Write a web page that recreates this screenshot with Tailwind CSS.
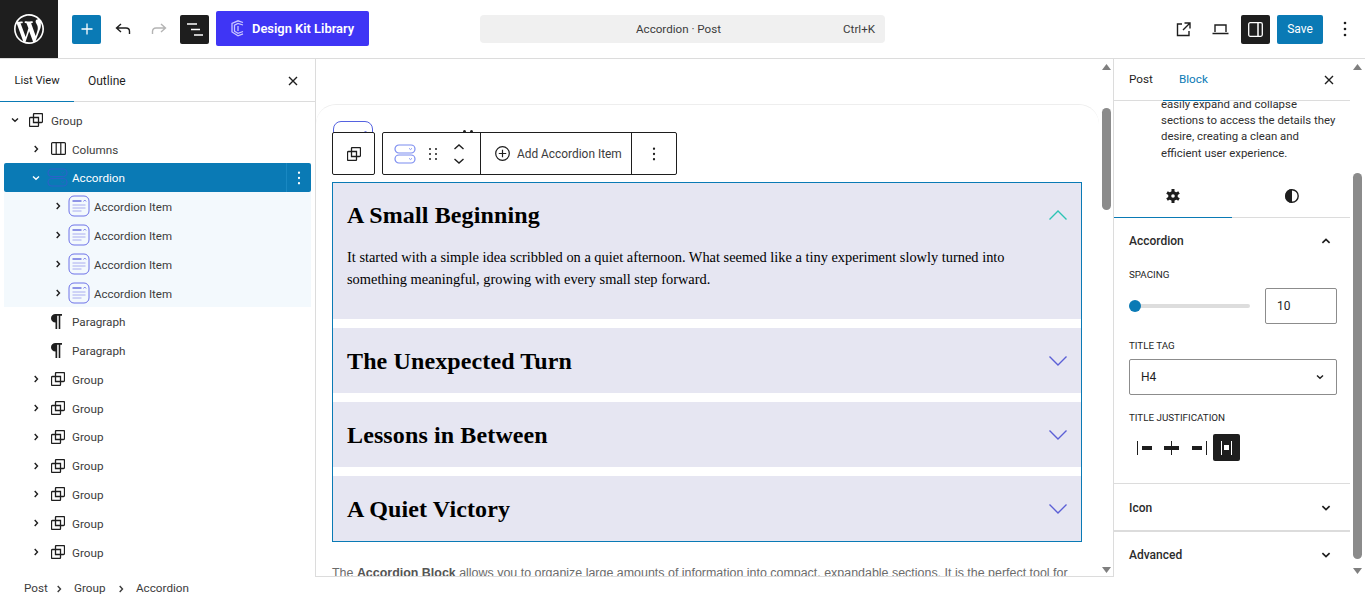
<!DOCTYPE html>
<html lang="en">
<head>
<meta charset="utf-8">
<title>Accordion · Post</title>
<script src="https://cdn.jsdelivr.net/npm/@tailwindcss/browser@4"></script>
</head>
<body class="bg-white">
<svg class="hidden" width="0" height="0">
  <defs>
    <symbol id="group" viewBox="0 0 14 14"><path d="M4.500 4.500H1.500a1 1 0 0 0-1 1v7a1 1 0 0 0 1 1h7a1 1 0 0 0 1-1V9.500M4.500 9.500V1.500a1 1 0 0 1 1-1h7a1 1 0 0 1 1 1v7a1 1 0 0 1-1 1h-8ZM4.500 4.500h5v5" fill="none" stroke="currentColor" stroke-width="1.300"/></symbol>
    <symbol id="down" viewBox="0 0 10 10"><path d="M2 3.500 5 6.300l3-2.800" fill="none" stroke="currentColor" stroke-width="1.400"/></symbol>
    <symbol id="right" viewBox="0 0 10 10"><path d="M3.700 2 6.500 5l-2.800 3" fill="none" stroke="currentColor" stroke-width="1.400"/></symbol>
    <symbol id="item" viewBox="0 0 22 22"><rect x="1" y="1" width="20" height="20" rx="5" fill="none" stroke="#6d72e8" stroke-width="1"/><path d="M4.500 6h9" stroke="#4a4fd8" stroke-width="1.200"/><path d="m15.500 6.500 1.300-1.500 1.300 1.500" fill="none" stroke="#7d82ee" stroke-width="1"/><path d="M4.500 10h13M4.500 13h13M4.500 16h9" stroke="#a9acf0" stroke-width="1"/></symbol>
    <symbol id="kebab" viewBox="0 0 4 16"><circle cx="2" cy="2" r="1.300" fill="currentColor"/><circle cx="2" cy="8" r="1.300" fill="currentColor"/><circle cx="2" cy="14" r="1.300" fill="currentColor"/></symbol>
    <symbol id="close" viewBox="0 0 10 10"><path d="m1 1 8 8M9 1 1 9" fill="none" stroke="currentColor" stroke-width="1.400"/></symbol>
    <symbol id="accordion" viewBox="0 0 22 20"><rect x="1" y="1" width="20" height="8" rx="4" fill="none" stroke="currentColor" stroke-width="1.200"/><rect x="1" y="11" width="20" height="8" rx="4" fill="none" stroke="currentColor" stroke-width="1.200"/><path d="m15 4.300 1.500 1.300 1.500-1.300M15 14.300l1.500 1.300 1.500-1.300" fill="none" stroke="currentColor" stroke-width=".9"/></symbol>
  </defs>
</svg>

<div class="w-[1365px] h-[599px] overflow-hidden flex flex-col text-[11.700px] text-[#1e1e1e] font-['Roboto','Noto_Sans',sans-serif]">
  <!-- Top bar -->
  <header class="h-[59px] shrink-0 border-b border-[#dcdcdc] flex items-center">
    <div class="w-[58px] h-[58px] bg-[#1e1e1e] flex items-center justify-center">
      <svg width="30" height="30" viewBox="0 0 20 20" fill="#fff"><path d="M20 10c0-5.510-4.490-10-10-10C4.480 0 0 4.490 0 10c0 5.520 4.480 10 10 10 5.510 0 10-4.480 10-10zM7.780 15.370 4.370 6.220c.55-.02 1.170-.08 1.170-.08.5-.06.44-1.130-.06-1.110 0 0-1.450.11-2.370.11-.18 0-.37 0-.58-.01C4.120 2.690 6.870 1.110 10 1.110c2.330 0 4.450.87 6.050 2.340-.68-.11-1.650.39-1.650 1.580 0 .74.45 1.360.9 2.100.35.61.55 1.360.55 2.460 0 1.490-1.400 5-1.400 5l-3.030-8.370c.54-.02.82-.17.82-.17.5-.05.44-1.250-.06-1.220 0 0-1.440.12-2.380.12-.87 0-2.330-.12-2.330-.12-.5-.03-.56 1.200-.06 1.220l.92.08 1.260 3.410zM17.410 10c.24-.64.74-1.870.43-4.250.7 1.290 1.050 2.710 1.050 4.250 0 3.290-1.730 6.240-4.400 7.780.97-2.590 1.940-5.200 2.920-7.780zM6.100 18.090C3.120 16.650 1.110 13.530 1.110 10c0-1.300.23-2.480.72-3.590C3.250 10.300 4.670 14.200 6.100 18.090zm4.030-6.630 2.580 6.980c-.86.29-1.760.45-2.710.45-.79 0-1.570-.11-2.290-.33.81-2.380 1.620-4.740 2.420-7.100z"/></svg>
    </div>
    <div class="ml-[14px] w-[29px] h-[29px] rounded-[2px] bg-[#0a7ab5] flex items-center justify-center">
      <svg width="12" height="12" viewBox="0 0 12 12"><path d="M6 .5v11M.5 6h11" stroke="#fff" stroke-width="1.300"/></svg>
    </div>
    <div class="ml-[14px] w-[16px] flex justify-center">
      <svg width="16" height="12" viewBox="0 0 16 12" fill="none" stroke="#1e1e1e" stroke-width="1.400"><path d="M6 1 1.500 5 6 9M1.500 5H11c2.300 0 3.500 1.600 3.500 3.500V11"/></svg>
    </div>
    <div class="ml-[20px] w-[16px] flex justify-center">
      <svg width="16" height="12" viewBox="0 0 16 12" fill="none" stroke="#b4b4b4" stroke-width="1.400"><path d="m10 1 4.500 4L10 9M14.500 5H5C2.700 5 1.500 6.600 1.500 8.500V11"/></svg>
    </div>
    <div class="ml-[13px] w-[29px] h-[29px] rounded-[2px] bg-[#1e1e1e] flex items-center justify-center">
      <svg width="16" height="13" viewBox="0 0 16 13" stroke="#fff" stroke-width="1.500"><path d="M0 1h10M4 6.500h9M7 12h9"/></svg>
    </div>
    <div class="ml-[7px] mb-[1px] w-[153px] h-[35px] rounded-[2px] bg-[#3f35f5] flex items-center pl-[14px] gap-[6px] text-white font-semibold text-[12.900px]">
      <svg width="16" height="17" viewBox="0 0 16 17" fill="none" stroke="#c9c6ff" stroke-width="1.300"><path d="M13 2.500 8 .8 2 3.500v8.500L8 15.800l5-2M13 5 8 3.500 4.500 5.200v6L8 13.300l5-1.800M8 6v5"/></svg>
      <span>Design Kit Library</span>
    </div>
    <div class="ml-[111px] w-[405px] h-[28px] rounded-[4px] bg-[#f0f0f0] relative flex items-center justify-center text-[11.600px] text-[#3c3c3c] pt-[2px]">
      <span class="mr-[8px]">Accordion · Post</span>
      <span class="absolute right-[10px]">Ctrl+K</span>
    </div>
    <div class="ml-[290px] w-[16px] flex justify-center">
      <svg width="15" height="15" viewBox="0 0 15 15" fill="none" stroke="#1e1e1e" stroke-width="1.400"><path d="M6 2H1.500v11.500H13V9M8.500 1H14v5.500M14 1 7 8"/></svg>
    </div>
    <div class="ml-[21px] w-[17px] flex justify-center">
      <svg width="17" height="11" viewBox="0 0 17 11" fill="none" stroke="#1e1e1e" stroke-width="1.400"><path d="M3 8V1h11v7M.5 9.500h16"/></svg>
    </div>
    <div class="ml-[12px] w-[29px] h-[29px] rounded-[2px] bg-[#1e1e1e] flex items-center justify-center">
      <svg width="15" height="15" viewBox="0 0 15 15" fill="none" stroke="#fff" stroke-width="1.300"><rect x=".7" y=".7" width="13.600" height="13.600" rx="1.500"/><path d="M10 .7v13.600" stroke-width="1.500"/></svg>
    </div>
    <div class="ml-[7px] w-[46px] h-[29px] rounded-[2px] bg-[#0a7ab5] text-white flex items-center justify-center text-[12px]">Save</div>
    <svg class="ml-[20px] text-[#1e1e1e]" width="4" height="16"><use href="#kebab"/></svg>
  </header>

  <!-- Main area -->
  <div class="flex h-[518px] shrink-0">
    <!-- List view panel -->
    <aside class="w-[316px] shrink-0 border-r border-[#dcdcdc] flex flex-col">
      <div class="h-[43px] border-b border-[#dcdcdc] flex items-center relative shrink-0">
        <span class="w-[74px] text-center pt-[2px] text-[11.200px]">List View</span>
        <span class="ml-[14px] pt-[2px] text-[12px]">Outline</span>
        <svg class="absolute right-[17px] top-[17px]" width="10" height="10"><use href="#close"/></svg>
        <div class="absolute left-0 bottom-[-1px] w-[74px] h-px bg-[#0a7ab5]"></div>
      </div>
      <div class="flex flex-col pt-[3.600px] pl-[4px] pr-[4px] [&_span]:pt-[3px]">
        <div class="h-[28.800px] flex items-center pl-[6px]"><svg class="w-[10px] h-[10px]"><use href="#down"/></svg><svg class="ml-[9px] w-[14px] h-[14px]"><use href="#group"/></svg><span class="ml-[8px] text-[#3c3c3c]">Group</span></div>
        <div class="h-[28.800px] flex items-center pl-[27px]"><svg class="w-[10px] h-[10px]"><use href="#right"/></svg><svg class="ml-[10px] w-[15px] h-[13px]" viewBox="0 0 15 13" fill="none" stroke="#1e1e1e" stroke-width="1.200"><rect x=".6" y=".6" width="13.800" height="11.800" rx="1"/><path d="M5.200.6v11.800M9.800.6v11.800"/></svg><span class="ml-[6px] text-[#3c3c3c]">Columns</span></div>
        <div class="h-[28.800px] flex items-center pl-[27px] bg-[#0a7ab5] rounded-[2px] text-white relative"><svg class="w-[10px] h-[10px]"><use href="#down"/></svg><svg class="ml-[6px] w-[21px] h-[19px] text-[#2b62c8]"><use href="#accordion"/></svg><span class="ml-[4px]">Accordion</span><div class="absolute right-0 top-0 h-full w-[25px] border-l border-[#1988c2] flex items-center justify-center"><svg class="text-white" width="4" height="14" viewBox="0 0 4 16"><use href="#kebab"/></svg></div></div>
        <div class="bg-[#f3f9fd] text-[11.500px]">
          <div class="h-[28.800px] flex items-center pl-[49px]"><svg class="w-[10px] h-[10px]"><use href="#right"/></svg><svg class="ml-[5px] w-[22px] h-[22px]"><use href="#item"/></svg><span class="ml-[4px] text-[#3c3c3c]">Accordion Item</span></div>
          <div class="h-[28.800px] flex items-center pl-[49px]"><svg class="w-[10px] h-[10px]"><use href="#right"/></svg><svg class="ml-[5px] w-[22px] h-[22px]"><use href="#item"/></svg><span class="ml-[4px] text-[#3c3c3c]">Accordion Item</span></div>
          <div class="h-[28.800px] flex items-center pl-[49px]"><svg class="w-[10px] h-[10px]"><use href="#right"/></svg><svg class="ml-[5px] w-[22px] h-[22px]"><use href="#item"/></svg><span class="ml-[4px] text-[#3c3c3c]">Accordion Item</span></div>
          <div class="h-[28.800px] flex items-center pl-[49px]"><svg class="w-[10px] h-[10px]"><use href="#right"/></svg><svg class="ml-[5px] w-[22px] h-[22px]"><use href="#item"/></svg><span class="ml-[4px] text-[#3c3c3c]">Accordion Item</span></div>
        </div>
        <div class="h-[28.800px] flex items-center pl-[47px]"><svg class="w-[11px] h-[15px]" viewBox="0 0 11 15"><path d="M4.500 15V8.500C2 8.500 0 6.800 0 4.300S2 0 4.500 0H11v1.800H9.300V15H7.700V1.800H6.200V15z" fill="#1e1e1e"/></svg><span class="ml-[10px] text-[#3c3c3c]">Paragraph</span></div>
        <div class="h-[28.800px] flex items-center pl-[47px]"><svg class="w-[11px] h-[15px]" viewBox="0 0 11 15"><path d="M4.500 15V8.500C2 8.500 0 6.800 0 4.300S2 0 4.500 0H11v1.800H9.300V15H7.700V1.800H6.200V15z" fill="#1e1e1e"/></svg><span class="ml-[10px] text-[#3c3c3c]">Paragraph</span></div>
        <div class="h-[28.800px] flex items-center pl-[27px]"><svg class="w-[10px] h-[10px]"><use href="#right"/></svg><svg class="ml-[10px] w-[14px] h-[14px]"><use href="#group"/></svg><span class="ml-[7px] text-[#3c3c3c]">Group</span></div>
        <div class="h-[28.800px] flex items-center pl-[27px]"><svg class="w-[10px] h-[10px]"><use href="#right"/></svg><svg class="ml-[10px] w-[14px] h-[14px]"><use href="#group"/></svg><span class="ml-[7px] text-[#3c3c3c]">Group</span></div>
        <div class="h-[28.800px] flex items-center pl-[27px]"><svg class="w-[10px] h-[10px]"><use href="#right"/></svg><svg class="ml-[10px] w-[14px] h-[14px]"><use href="#group"/></svg><span class="ml-[7px] text-[#3c3c3c]">Group</span></div>
        <div class="h-[28.800px] flex items-center pl-[27px]"><svg class="w-[10px] h-[10px]"><use href="#right"/></svg><svg class="ml-[10px] w-[14px] h-[14px]"><use href="#group"/></svg><span class="ml-[7px] text-[#3c3c3c]">Group</span></div>
        <div class="h-[28.800px] flex items-center pl-[27px]"><svg class="w-[10px] h-[10px]"><use href="#right"/></svg><svg class="ml-[10px] w-[14px] h-[14px]"><use href="#group"/></svg><span class="ml-[7px] text-[#3c3c3c]">Group</span></div>
        <div class="h-[28.800px] flex items-center pl-[27px]"><svg class="w-[10px] h-[10px]"><use href="#right"/></svg><svg class="ml-[10px] w-[14px] h-[14px]"><use href="#group"/></svg><span class="ml-[7px] text-[#3c3c3c]">Group</span></div>
        <div class="h-[28.800px] flex items-center pl-[27px]"><svg class="w-[10px] h-[10px]"><use href="#right"/></svg><svg class="ml-[10px] w-[14px] h-[14px]"><use href="#group"/></svg><span class="ml-[7px] text-[#3c3c3c]">Group</span></div>
      </div>
    </aside>

    <!-- Canvas -->
    <main class="w-[783px] shrink-0 overflow-hidden bg-white pt-[45px] border-b border-[#dcdcdc]">
      <div class="rounded-t-[20px] border-t border-[#eeeeee] h-[600px] pt-[77px] pl-[16px] pr-[17px] relative">
        <!-- peeking block icon behind toolbar -->
        <div class="absolute left-[17px] top-[16px] w-[40px] h-[20px] rounded-t-[8px] border-[1.500px] border-[#5562e0] bg-white flex items-end pl-[5px] pb-[6.500px] gap-[14px]"><div class="w-[11px] h-[2px] bg-[#3b46c8]"></div><div class="w-[3px] h-[3px] rounded-full bg-[#6d78e6]"></div></div>
        <div class="absolute left-[147px] top-[25px] flex gap-[4px]"><div class="w-[3px] h-[3px] rounded-full bg-[#1e1e1e]"></div><div class="w-[3px] h-[3px] rounded-full bg-[#1e1e1e]"></div></div>
        <!-- Block toolbar -->
        <div class="absolute left-[16px] top-[27px] flex gap-[7px]">
          <div class="w-[43px] h-[43px] bg-white border border-[#1e1e1e] rounded-[2px] flex items-center justify-center"><svg class="w-[14px] h-[14px]"><use href="#group"/></svg></div>
          <div class="w-[295px] h-[43px] bg-white border border-[#1e1e1e] rounded-[2px] flex items-center">
            <div class="w-[98px] h-full flex items-center border-r border-[#1e1e1e] pl-[11px]">
              <svg class="w-[22px] h-[20px] text-[#7b8cf0]"><use href="#accordion"/></svg>
              <svg class="ml-[12px]" width="10" height="14" viewBox="0 0 10 14" fill="#1e1e1e"><circle cx="2" cy="2" r="1"/><circle cx="8" cy="2" r="1"/><circle cx="2" cy="7" r="1"/><circle cx="8" cy="7" r="1"/><circle cx="2" cy="12" r="1"/><circle cx="8" cy="12" r="1"/></svg>
              <svg class="ml-[15px]" width="12" height="22" viewBox="0 0 12 22" fill="none" stroke="#1e1e1e" stroke-width="1.400"><path d="m1.500 6 4.500-4 4.500 4M1.500 16l4.500 4 4.500-4"/></svg>
            </div>
            <div class="w-[151px] h-full flex items-center border-r border-[#1e1e1e] pl-[14px] gap-[7px]">
              <svg width="15" height="15" viewBox="0 0 15 15" fill="none" stroke="#1e1e1e" stroke-width="1.200"><circle cx="7.500" cy="7.500" r="6.800"/><path d="M7.500 3.800v7.400M3.800 7.500h7.400"/></svg>
              <span class="text-[#3c3c3c] text-[11.900px] pt-[3px]">Add Accordion Item</span>
            </div>
            <div class="flex-1 flex justify-center"><svg width="4" height="14"><use href="#kebab"/></svg></div>
          </div>
        </div>
        <!-- Accordion block -->
        <div class="border border-[#0a7ab5] font-['Liberation_Serif',serif] flex flex-col gap-[9px]">
          <div class="bg-[#e6e6f2] h-[136px] pl-[14px] pr-[13px] pt-[17px]">
            <div class="flex items-center justify-between h-[30px]"><h4 class="text-[24px] tracking-[0.12px] font-bold text-black leading-[30px]">A Small Beginning</h4><svg width="20" height="12" viewBox="0 0 20 12" fill="none" stroke="#2cc4b4" stroke-width="1.400"><path d="m1.500 10.500 8.500-8.500 8.500 8.500"/></svg></div>
            <p class="mt-[16px] text-[14.400px] leading-[22px] text-black">It started with a simple idea scribbled on a quiet afternoon. What seemed like a tiny experiment slowly turned into<br>something meaningful, growing with every small step forward.</p>
          </div>
          <div class="bg-[#e6e6f2] h-[65px] pl-[14px] pr-[13px] flex items-center justify-between"><h4 class="text-[24px] tracking-[0.12px] font-bold text-black">The Unexpected Turn</h4><svg width="20" height="12" viewBox="0 0 20 12" fill="none" stroke="#5b5fd6" stroke-width="1.400"><path d="m1.500 1.500 8.500 8.500 8.500-8.500"/></svg></div>
          <div class="bg-[#e6e6f2] h-[65px] pl-[14px] pr-[13px] flex items-center justify-between"><h4 class="text-[24px] tracking-[0.12px] font-bold text-black">Lessons in Between</h4><svg width="20" height="12" viewBox="0 0 20 12" fill="none" stroke="#5b5fd6" stroke-width="1.400"><path d="m1.500 1.500 8.500 8.500 8.500-8.500"/></svg></div>
          <div class="bg-[#e6e6f2] h-[65px] pl-[14px] pr-[13px] flex items-center justify-between"><h4 class="text-[24px] tracking-[0.12px] font-bold text-black">A Quiet Victory</h4><svg width="20" height="12" viewBox="0 0 20 12" fill="none" stroke="#5b5fd6" stroke-width="1.400"><path d="m1.500 1.500 8.500 8.500 8.500-8.500"/></svg></div>
        </div>
        <p class="mt-[22px] text-[12.450px] leading-[18px] text-[#6b6b6b] font-['Liberation_Sans',sans-serif]">The <b class="text-[#555]">Accordion Block</b> allows you to organize large amounts of information into compact, expandable sections. It is the perfect tool for</p>
      </div>
    </main>

    <!-- Canvas scrollbar -->
    <div class="w-[14px] shrink-0 flex flex-col items-center bg-white relative border-b border-[#dcdcdc]">
      <svg class="mt-[5px]" width="9" height="6"><path d="M4.500 0 9 6H0z" fill="#7f7f7f"/></svg>
      <div class="mt-[38px] w-[9px] h-[102px] rounded-full bg-[#8b8b8b]"></div>
      <svg class="absolute bottom-[3px]" width="9" height="6"><path d="M4.500 6 9 0H0z" fill="#7f7f7f"/></svg>
    </div>

    <!-- Right sidebar -->
    <aside class="w-[237px] shrink-0 border-l border-[#dcdcdc] flex flex-col">
      <div class="h-[42px] shrink-0 border-b border-[#dcdcdc] relative flex items-center pl-[15px]">
        <span class="w-[22px]">Post</span>
        <span class="ml-[28px] text-[#0a7ab5]">Block</span>
        <svg class="absolute right-[16px] top-[16px]" width="10" height="10"><use href="#close"/></svg>
        <div class="absolute left-[49px] bottom-[-1px] w-[57px] h-px bg-[#0a7ab5]"></div>
      </div>
      <div class="h-[60px] shrink-0 overflow-hidden flex flex-col justify-end pl-[47px] pr-[6px] text-[11.400px] leading-[16.300px] text-[#2f2f2f]">
        <p class="whitespace-nowrap">easily expand and collapse</p>
        <p class="whitespace-nowrap">sections to access the details they</p>
        <p class="whitespace-nowrap">desire, creating a clean and</p>
        <p class="whitespace-nowrap">efficient user experience.</p>
      </div>
      <div class="h-[57px] shrink-0 border-b border-[#dcdcdc] relative flex pt-[28px]">
        <div class="w-[118px] flex justify-center"><svg width="14" height="14" viewBox="0 0 14 14"><g stroke="#1e1e1e" stroke-width="3"><path d="M7 0v14M1 3.500l12 7M13 3.500l-12 7"/></g><circle cx="7" cy="7" r="4.800" fill="#1e1e1e"/><circle cx="7" cy="7" r="1.800" fill="#fff"/></svg></div>
        <div class="w-[119px] pl-[2px] flex justify-center"><svg width="14" height="14" viewBox="0 0 14 14"><circle cx="7" cy="7" r="6.200" fill="#fff" stroke="#1e1e1e" stroke-width="1.400"/><path d="M7 0a7 7 0 0 0 0 14z" fill="#1e1e1e"/></svg></div>
        <div class="absolute left-0 bottom-[-1px] w-[118px] h-px bg-[#0a7ab5]"></div>
      </div>
      <section class="h-[266px] shrink-0 border-b border-[#dcdcdc] px-[15px] relative">
        <div class="h-[46px] flex items-center justify-between pr-[3px]">
          <span class="font-medium text-[#2b2b2b] text-[12px]">Accordion</span>
          <svg class="w-[12px] h-[12px] rotate-180" viewBox="0 0 10 10"><use href="#down"/></svg>
        </div>
        <div class="text-[9.800px] mt-[5px] leading-[12px] text-[#1e1e1e]">SPACING</div>
        <div class="mt-[7px] flex items-center">
          <div class="w-[121px] h-[4px] shrink-0 rounded-full bg-[#dddddd] relative"><div class="absolute left-0 top-[-4px] w-[12px] h-[12px] rounded-full bg-[#0a7ab5]"></div></div>
          <div class="ml-[15px] w-[72px] shrink-0 h-[36px] rounded-[2px] border border-[#8c8c8c] flex items-center pl-[11px] text-[12px]">10</div>
        </div>
        <div class="text-[9.800px] mt-[16px] leading-[12px]">TITLE TAG</div>
        <div class="mt-[7px] w-[208px] h-[36px] rounded-[2px] border border-[#8c8c8c] flex items-center justify-between pl-[11px] pr-[11px] text-[12px]"><span>H4</span><svg class="w-[10px] h-[10px]"><use href="#down"/></svg></div>
        <div class="text-[9.800px] mt-[17px] leading-[12px]">TITLE JUSTIFICATION</div>
        <div class="mt-[10px] flex items-center pl-[8px]">
          <div class="w-[18px] h-[14px] flex items-center"><div class="w-px h-[14px] bg-[#1e1e1e]"></div><div class="ml-[4px] w-[10px] h-[4px] bg-[#1e1e1e]"></div></div>
          <div class="ml-[9px] w-[15px] h-[14px] relative flex items-center justify-center"><div class="w-[15px] h-[4px] bg-[#1e1e1e]"></div><div class="absolute w-px h-[14px] bg-[#1e1e1e]"></div></div>
          <div class="ml-[13px] w-[15px] h-[14px] flex items-center justify-end"><div class="mr-[4px] w-[10px] h-[4px] bg-[#1e1e1e]"></div><div class="w-px h-[14px] bg-[#1e1e1e]"></div></div>
          <div class="ml-[6px] w-[27px] h-[27px] rounded-[2px] bg-[#1e1e1e] flex items-center justify-center gap-[2px]"><div class="w-px h-[14px] bg-white"></div><div class="w-[5px] h-[5px] bg-white"></div><div class="w-px h-[14px] bg-white"></div></div>
        </div>
      </section>
      <section class="h-[48px] shrink-0 border-b-2 border-[#dcdcdc] pt-[2px] pl-[15px] flex items-center justify-between pr-[18px]">
        <span class="font-medium text-[#2b2b2b] text-[12px]">Icon</span><svg class="w-[12px] h-[12px]" viewBox="0 0 10 10"><use href="#down"/></svg>
      </section>
      <section class="h-[44px] shrink-0 pt-[2px] pl-[15px] flex items-center justify-between pr-[18px]">
        <span class="font-medium text-[#2b2b2b] text-[12px]">Advanced</span><svg class="w-[12px] h-[12px]" viewBox="0 0 10 10"><use href="#down"/></svg>
      </section>
    </aside>

    <!-- Sidebar scrollbar -->
    <div class="w-[15px] shrink-0 flex flex-col items-center relative">
      <svg class="mt-[5px]" width="9" height="6"><path d="M4.500 0 9 6H0z" fill="#7f7f7f"/></svg>
      <div class="mt-[103px] w-[9px] h-[386px] rounded-full bg-[#8b8b8b]"></div>
      <svg class="absolute bottom-[3px]" width="9" height="6"><path d="M4.500 6 9 0H0z" fill="#7f7f7f"/></svg>
    </div>
  </div>

  <!-- Breadcrumb -->
  <footer class="flex-1 flex items-center pl-[24px] pt-[2px] text-[#3c3c3c]">
    <span class="w-[23px]">Post</span><svg class="ml-[7px] w-[10px] h-[10px]"><use href="#right"/></svg>
    <span class="ml-[10px] w-[32px]">Group</span><svg class="ml-[10px] w-[10px] h-[10px]"><use href="#right"/></svg>
    <span class="ml-[10px]">Accordion</span>
  </footer>
</div>
</body>
</html>
